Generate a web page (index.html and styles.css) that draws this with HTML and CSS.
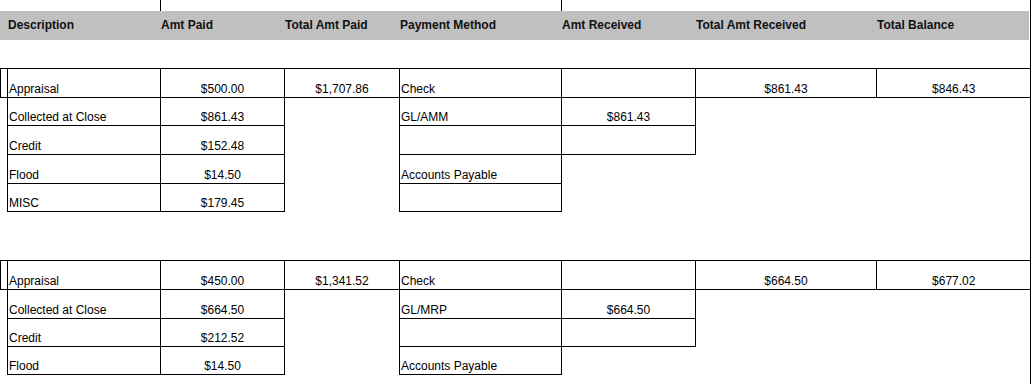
FILE: index.html
```html
<!DOCTYPE html>
<html lang="en">
<head>
<meta charset="utf-8">
<title>Payments</title>
<link rel="stylesheet" href="styles.css">
</head>
<body>
<div class="page">
  <div class="top-strip">
    <div></div><div></div><div class="vl"></div><div></div><div></div><div class="vl"></div><div></div><div></div>
  </div>
  <div class="header">
    <div></div>
    <div class="h">Description</div>
    <div class="h">Amt Paid</div>
    <div class="h">Total Amt Paid</div>
    <div class="h">Payment Method</div>
    <div class="h">Amt Received</div>
    <div class="h">Total Amt Received</div>
    <div class="h">Total Balance</div>
  </div>

  <table class="grid first">
    <colgroup>
      <col class="c0"><col class="c1"><col class="c2"><col class="c3"><col class="c4"><col class="c5"><col class="c6"><col class="c7">
    </colgroup>
    <tr class="r29">
      <td class="b"></td>
      <td class="b">Appraisal</td>
      <td class="b num">$500.00</td>
      <td class="b num">$1,707.86</td>
      <td class="b">Check</td>
      <td class="b"></td>
      <td class="b num">$861.43</td>
      <td class="b num last">$846.43</td>
    </tr>
    <tr class="r28">
      <td></td>
      <td class="b">Collected at Close</td>
      <td class="b num">$861.43</td>
      <td></td>
      <td class="b">GL/AMM</td>
      <td class="b num">$861.43</td>
      <td></td><td></td>
    </tr>
    <tr class="r29">
      <td></td>
      <td class="b">Credit</td>
      <td class="b num">$152.48</td>
      <td></td>
      <td class="b"></td>
      <td class="b"></td>
      <td></td><td></td>
    </tr>
    <tr class="r29">
      <td></td>
      <td class="b">Flood</td>
      <td class="b num">$14.50</td>
      <td></td>
      <td class="b">Accounts Payable</td>
      <td></td><td></td><td></td>
    </tr>
    <tr class="r28">
      <td></td>
      <td class="b">MISC</td>
      <td class="b num">$179.45</td>
      <td></td>
      <td class="b"></td>
      <td></td><td></td><td></td>
    </tr>
  </table>

  <table class="grid second">
    <colgroup>
      <col class="c0"><col class="c1"><col class="c2"><col class="c3"><col class="c4"><col class="c5"><col class="c6"><col class="c7">
    </colgroup>
    <tr class="r29">
      <td class="b"></td>
      <td class="b">Appraisal</td>
      <td class="b num">$450.00</td>
      <td class="b num">$1,341.52</td>
      <td class="b">Check</td>
      <td class="b"></td>
      <td class="b num">$664.50</td>
      <td class="b num last">$677.02</td>
    </tr>
    <tr class="r29">
      <td></td>
      <td class="b">Collected at Close</td>
      <td class="b num">$664.50</td>
      <td></td>
      <td class="b">GL/MRP</td>
      <td class="b num">$664.50</td>
      <td></td><td></td>
    </tr>
    <tr class="r28">
      <td></td>
      <td class="b">Credit</td>
      <td class="b num">$212.52</td>
      <td></td>
      <td class="b"></td>
      <td class="b"></td>
      <td></td><td></td>
    </tr>
    <tr class="r28">
      <td></td>
      <td class="b">Flood</td>
      <td class="b num">$14.50</td>
      <td></td>
      <td class="b">Accounts Payable</td>
      <td></td><td></td><td></td>
    </tr>
  </table>
</div>
</body>
</html>
```

FILE: styles.css
```css
html, body {
  margin: 0;
  padding: 0;
  background: #fff;
}

body {
  font-family: "Liberation Sans", Arial, sans-serif;
  color: #000;
  overflow: hidden;
}

.page {
  width: 1030px;
  min-height: 384px;
  border-right: 1px solid #000;
}

.top-strip,
.header {
  display: grid;
  grid-template-columns: 7px 153px 124px 115px 162px 134px 181px 154px;
}

.top-strip {
  height: 11px;
}

.top-strip .vl {
  border-left: 1px solid #000;
}

.header {
  height: 29px;
  background: #c0c0c0;
  width: 1029px;
  grid-template-columns: 7px 153px 124px 115px 162px 134px 181px 153px;
}

.header .h {
  font-size: 12px;
  font-weight: bold;
  color: #111;
  padding: 7px 0 0 1px;
  line-height: 14px;
  white-space: nowrap;
}

.grid {
  border-collapse: collapse;
  table-layout: fixed;
  width: 1030px;
  font-size: 12px;
}

.grid.first {
  margin-top: 28px;
}

.grid.second {
  margin-top: 48px;
}

.c0 { width: 7px; }
.c1 { width: 153px; }
.c2 { width: 124px; }
.c3 { width: 115px; }
.c4 { width: 162px; }
.c5 { width: 134px; }
.c6 { width: 181px; }
.c7 { width: 154px; }

.r29 { height: 29px; }
.r28 { height: 28px; }

.grid td {
  padding: 0 0 0 1px;
  vertical-align: bottom;
  line-height: 15px;
  white-space: nowrap;
  overflow: hidden;
}

.grid td.b {
  border: 1px solid #000;
}

.grid td.last {
  border-right: none;
}

.grid td.num {
  text-align: center;
  padding-left: 0;
}
```
